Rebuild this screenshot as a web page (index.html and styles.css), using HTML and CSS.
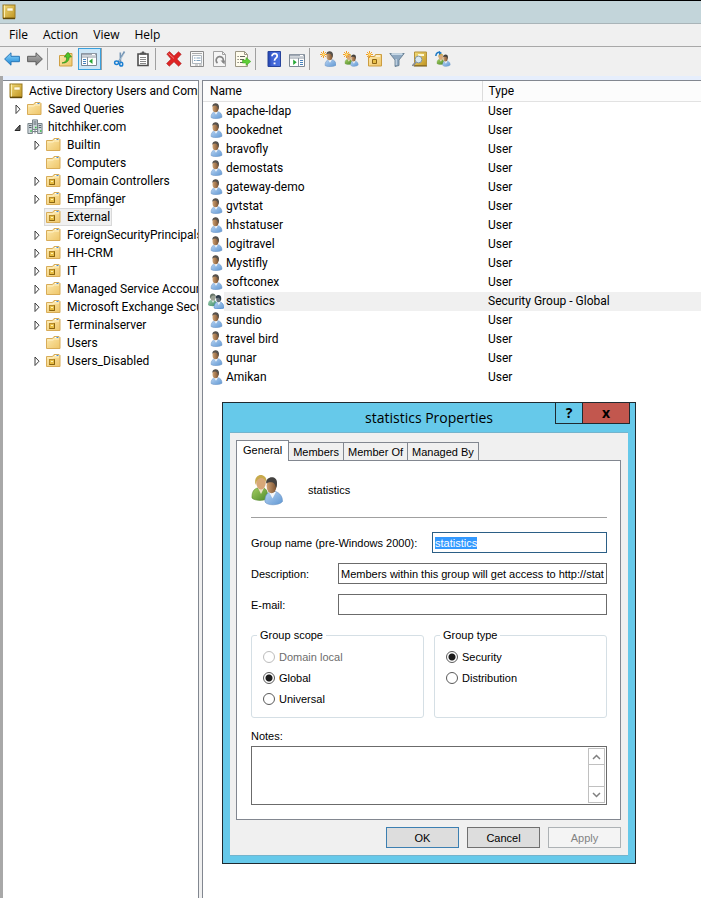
FILE: index.html
```html
<!DOCTYPE html>
<html lang="en">
<head>
<meta charset="utf-8">
<title>Active Directory Users and Computers</title>
<link rel="stylesheet" href="styles.css">
<script src="app.js" defer></script>
</head>
<body>
<svg class="sprite" aria-hidden="true">
  <defs>
    <linearGradient id="gFolder" x1="0" y1="0" x2="1" y2="1"><stop offset="0" stop-color="#fdeab0"/><stop offset="1" stop-color="#eec568"/></linearGradient>
    <linearGradient id="gBody" x1="0" y1="0" x2="1" y2="1"><stop offset="0" stop-color="#b9d4f2"/><stop offset="1" stop-color="#5f97d3"/></linearGradient>
    <linearGradient id="gGreen" x1="0" y1="0" x2="1" y2="1"><stop offset="0" stop-color="#a4cf62"/><stop offset="1" stop-color="#4f8a2c"/></linearGradient>
    <linearGradient id="gTeal" x1="0" y1="0" x2="1" y2="1"><stop offset="0" stop-color="#9ccbb0"/><stop offset="1" stop-color="#3f8f68"/></linearGradient>
    <linearGradient id="gFace" x1="0" y1="0" x2="1" y2="0"><stop offset="0" stop-color="#cfa273"/><stop offset="1" stop-color="#7c5230"/></linearGradient>
    <linearGradient id="gGold" x1="0" y1="0" x2="1" y2="1"><stop offset="0" stop-color="#f3dc7a"/><stop offset="1" stop-color="#bf9420"/></linearGradient>
    <linearGradient id="gBlue" x1="0" y1="0" x2="0" y2="1"><stop offset="0" stop-color="#8fd6fb"/><stop offset="1" stop-color="#1b86d6"/></linearGradient>
    <linearGradient id="gGray" x1="0" y1="0" x2="0" y2="1"><stop offset="0" stop-color="#b5b5b5"/><stop offset="1" stop-color="#707070"/></linearGradient>
    <linearGradient id="gHelp" x1="0" y1="0" x2="1" y2="0"><stop offset="0" stop-color="#1f3fa8"/><stop offset=".3" stop-color="#3f63d4"/><stop offset="1" stop-color="#4a72e0"/></linearGradient>
  </defs>
  <symbol id="book" viewBox="0 0 16 16">
    <rect x="2" y="1" width="12" height="13" fill="url(#gGold)" stroke="#9a7a22"/><path d="M2 14.5h12" stroke="#604808" stroke-width="1.4"/><path d="M3.5 1.5v12" stroke="#fbeeb0"/><rect x="6" y="4" width="6" height="3" fill="#fffbe6" stroke="#c8a848" stroke-width=".6"/>
  </symbol>
  <symbol id="folder" viewBox="0 0 16 16">
    <path d="M.500 13.500V3.500h6l1.500-2h5l1 1v11z" fill="url(#gFolder)" stroke="#d8ac58"/><path d="M9 2.500h4" stroke="#fff"/><path d="M10.500 2.500h2" stroke="#4a8fd0"/><path d="M1.500 5h5.500l1.500-1h4.500" fill="none" stroke="#fff2c8"/>
  </symbol>
  <symbol id="ou" viewBox="0 0 16 16">
    <path d="M.500 13.500V3.500h6l1.500-2h5l1 1v11z" fill="url(#gFolder)" stroke="#d8ac58"/><path d="M9 2.500h4" stroke="#fff"/><path d="M10.500 2.500h2" stroke="#4a8fd0"/><path d="M1.500 5h5.500l1.500-1h4.500" fill="none" stroke="#fff2c8"/><rect x="3.500" y="6.500" width="5" height="5" fill="#e7bd45" stroke="#b58a2c"/><path d="M5 8.500h2" stroke="#fff3b5"/><path d="M8.500 6.500v5H3.500" fill="none" stroke="#8a640f"/>
  </symbol>
  <symbol id="domain" viewBox="0 0 16 16">
    <g fill="#cbd4d9" stroke="#6f7a80" stroke-width=".9"><path d="M5.500 .900h5v9.600h-5z"/><path d="M.900 4.500h4.500v10H.900zM10.600 4.500h4.500v10h-4.500z"/></g>
    <path d="M6.500 3h3M6.500 5h3M2 6.500h2.500M2 8.500h2.500M11.700 6.500h2.500M11.700 8.500h2.500" stroke="#59646b"/><path d="M3.300 12h1.500M8 8.500h1.500M13 12h1.500" stroke="#2fbf3d" stroke-width="1.500"/><path d="M5.500 12.500h5M8 10.500v4" stroke="#7a848a"/>
  </symbol>
  <symbol id="user" viewBox="0 0 16 16">
    <path d="M3 14.500c0-3.500 1.500-5.500 4-5.800l2.500-.2c3 .5 4.500 2.500 4.500 5.800-2 1.500-8.500 2-11 .2z" fill="url(#gBody)" stroke="#6c94c4" stroke-width=".5"/><path d="M6 8.500l2 3.200 2-3.200z" fill="#f6f8fa"/><ellipse cx="7.500" cy="5" rx="3" ry="4.300" fill="url(#gFace)"/><path d="M4.300 3.800c-.3-4.600 6.700-4.800 6.700-.2 0 1.600-.3 2.400-.8 3.200C10 5 9.300 3 8 2.700c-1.500-.3-2.800.1-3.700 1.100z" fill="#55514c"/>
  </symbol>
  <symbol id="pair" viewBox="0 0 32 32">
    <path d="M1 24c-.3-6 2-9.500 6-10l6 0c4 2 4 7 3 11-4 2-12 2-15-1z" fill="url(#gGreen)" stroke="#578b31" stroke-width=".6"/><path d="M7 14l3 6 3-6z" fill="#eee2c8"/><ellipse cx="10" cy="9" rx="4.800" ry="6.500" fill="#d7a878"/><path d="M4.500 11C1.500-2 17-2 15.500 9c-1-3-3-5-5-5-3 0-5 2-6 7z" fill="#c7aa4c"/>
    <path d="M14 28c-.3-6 1.700-9 5.500-10l5-.5c4.500 1.500 7 5 7 10-3 4-15 4.500-17.500.5z" fill="url(#gBody)" stroke="#6791c3" stroke-width=".6"/><path d="M18 18l3.500 6.500 3.500-6.500z" fill="#f4f7fa"/><ellipse cx="20.500" cy="12" rx="4.900" ry="7.300" fill="url(#gFace)"/><path d="M15.200 9.500C14.500 1.500 26.500 1 26 9c0 3-.3 3.800-1 5-.5-2.500-1.500-4.800-3.200-5.400-2-.5-4.600-.4-6.600.9z" fill="#44423f"/>
  </symbol>
  <symbol id="group" viewBox="0 0 32 32">
    <path d="M0 24c0-6 2-9.500 6-10h7c4 2 4 7 3 11-4 2-12 2-16-1z" fill="url(#gTeal)"/><path d="M7 14l3 6 3-6z" fill="#e4eee9"/><ellipse cx="10" cy="9" rx="4.800" ry="6.500" fill="#9aa194"/><path d="M4.500 12C0-2 17-3 16 10c-1-4-3-5-5-5-3 0-5 2-6.500 7z" fill="#68766b"/>
    <path d="M12 30c0-7 2-11 6.500-12h6C29.500 19.500 32 24 32 30c-4 2.500-16 2.500-20 0z" fill="url(#gBody)" stroke="#3f7fca"/><path d="M18.500 18l3 6.500 3.500-6.500z" fill="#e8f2fb"/><ellipse cx="21" cy="12" rx="4.600" ry="6.500" fill="#6a747d"/><path d="M15.500 11C14 2 27 2 26.500 10.500c0 3-.5 4-1.500 5.500-.5-3-1.500-6-3.500-6.500-2-.3-4 0-6 1.500z" fill="#2c3a48"/>
  </symbol>
  <symbol id="spark" viewBox="0 0 8 8">
    <path d="M4 0v8M0 4h8M1.200 1.200l5.600 5.600M6.800 1.200L1.200 6.800" stroke="#f19a1d" stroke-width="1.100"/><circle cx="4" cy="4" r="1.500" fill="#ffe27c"/>
  </symbol>
  <symbol id="back" viewBox="0 0 16 16"><path d="M.600 8L7 1.800v3.500h8.400v5.400H7v3.500z" fill="url(#gBlue)" stroke="#2877b8"/></symbol>
  <symbol id="forward" viewBox="0 0 16 16"><path d="M15.400 8L9 1.800v3.500H.600v5.400H9v3.500z" fill="url(#gGray)" stroke="#5f5f5f"/></symbol>
  <symbol id="up" viewBox="0 0 16 16"><path d="M1.500 15V4.500h6l1-2h5.500V15z" fill="url(#gFolder)" stroke="#cfa044"/><path d="M4 12c4-1 5-3 4.500-6H6.300L10 1.300 13.500 6h-2.300c0 4-3 6.500-7.200 6z" fill="#4fc528" stroke="#2e8c18" stroke-width=".7"/></symbol>
  <symbol id="tree-pane" viewBox="0 0 16 16"><path d="M.500 2.500h15v12H.500z" fill="#fff" stroke="#7d8894"/><path d="M1 3.500h14" stroke="#a0a9b4" stroke-width="2"/><path d="M11 3.500h3" stroke="#fff"/><path d="M1 6h14" stroke="#8994a0"/><path d="M6.500 6v8" stroke="#8994a0"/><path d="M2 8.500h3M2 10.500h3M2 12.500h3" stroke="#4682bd"/><path d="M11.500 7.500v5.500L8 10.200z" fill="#28a736"/></symbol>
  <symbol id="cut" viewBox="0 0 16 16"><path d="M12.500.500L6.500 11M8.300 1.500L8.500 11" stroke="#7696b5" stroke-width="1.600"/><path d="M12 3L7 10" stroke="#d6e4ef" stroke-width=".5"/><ellipse cx="4.600" cy="11.800" rx="2" ry="1.700" fill="none" stroke="#1b7fd2" stroke-width="1.500"/><ellipse cx="9.200" cy="13.200" rx="1.500" ry="1.900" fill="none" stroke="#1b7fd2" stroke-width="1.500"/></symbol>
  <symbol id="paste" viewBox="0 0 16 16"><path d="M3 3h10v11.500H3z" fill="#fff" stroke="#4e4e4e" stroke-width="1.600"/><path d="M5 3.500V1.800h1.500L7 .500h2l.5 1.300H11v1.700z" fill="#555"/><path d="M5 6.500h6M5 8.500h6M5 10.500h6M5 12.500h6" stroke="#888"/></symbol>
  <symbol id="delete" viewBox="0 0 16 16"><path d="M.800 3L3.500.600 8 5.100 12.500.800 15.200 3.300 10.900 8l4.400 4.600-2.700 2.600L8 10.800l-4.700 4.400L.600 12.600 5.100 8z" fill="#df2424" stroke="#a81c1c" stroke-width=".6"/><path d="M2.500 2.500L8 7.500" stroke="#f27d78"/></symbol>
  <symbol id="props" viewBox="0 0 16 16"><path d="M1.500.500h13v15h-13z" fill="#f8f8f8" stroke="#8b8b8b"/><path d="M3 2.500h10" stroke="#aaa"/><path d="M3.500 4.500h9v8h-9z" fill="#fff" stroke="#b0b8bf"/><path d="M5 7h1.500M7.500 7h4M5 9.500h1.500M7.500 9.500h4" stroke="#7d9fbb"/><path d="M6 14h3M10 14h3" stroke="#a4a4a4"/></symbol>
  <symbol id="refresh" viewBox="0 0 16 16"><path d="M1.500.500h9l3 3v12h-12z" fill="#f6f6f6" stroke="#a2a2a2"/><path d="M10.500.500v3h3" fill="none" stroke="#a2a2a2"/><path d="M5.500 12a3.600 3.600 0 1 1 5-.500" fill="none" stroke="#868686" stroke-width="1.700"/><path d="M8.500 9.500l4.500 0-.500 4z" fill="#868686"/></symbol>
  <symbol id="export" viewBox="0 0 16 16"><path d="M.500.500h9l3 3v12H.500z" fill="#fffcec" stroke="#9c9784"/><path d="M9.500.500v3h3" fill="none" stroke="#9c9784"/><path d="M2.500 5.500h1.200M2.500 8.500h1.200M2.500 11.500h1.200M5 5.500h5M5 8.500h4M5 11.500h3" stroke="#64645c"/><path d="M7.500 9h3.500V6.500l4.800 4-4.800 4V12H7.500z" fill="#60cf38" stroke="#36a219" stroke-width=".5"/></symbol>
  <symbol id="help" viewBox="0 0 16 16"><path d="M2 .500h12.500v15H2z" fill="url(#gHelp)" stroke="#27439b"/><path d="M6 5.200C6 1.800 11.200 2 11.200 5c0 2.200-2.700 2.300-2.700 4.800" fill="none" stroke="#fff" stroke-width="1.700"/><path d="M7.600 11.500h1.900v1.800H7.600z" fill="#fff"/></symbol>
  <symbol id="action-pane" viewBox="0 0 16 16"><path d="M.500 3.500h15v12H.500z" fill="#fff" stroke="#7d8894"/><path d="M1 4.500h14" stroke="#a0a9b4" stroke-width="2"/><path d="M11 4.500h3" stroke="#fff"/><path d="M1 7h14" stroke="#8994a0"/><path d="M9.500 7v8" stroke="#8994a0"/><path d="M11 9.500h3M11 11.500h3M11 13.500h3" stroke="#4682bd"/><path d="M4.200 8.500v5.500l3.500-2.800z" fill="#28a736"/></symbol>
  <symbol id="new-user" viewBox="0 0 16 16"><use href="#user" x="2" y="0" width="16" height="16"/><use href="#spark" x="0" y="0" width="7" height="7"/></symbol>
  <symbol id="new-group" viewBox="0 0 16 16"><use href="#pair" x="1" y="2" width="15" height="14"/><use href="#spark" x="0" y="0" width="7" height="7"/></symbol>
  <symbol id="new-ou" viewBox="0 0 16 16"><path d="M2.500 15V5.500h6l1-2h6V15z" fill="url(#gFolder)" stroke="#cc9d40"/><path d="M10 5h4" stroke="#fff"/><path d="M6.500 8.500h4v4h-4z" fill="#e7bd45" stroke="#8c6412"/><use href="#spark" x="0" y="0" width="7" height="7"/></symbol>
  <symbol id="filter" viewBox="0 0 16 16"><path d="M.800 2.500h14.400L10 9v5.500l-4 1V9z" fill="#8da7c0" stroke="#5b7388" stroke-width=".8"/><path d="M2.500 3h11" stroke="#dbe8f3" stroke-width="1.500"/><path d="M7.200 8v6" stroke="#d3e0eb"/></symbol>
  <symbol id="find" viewBox="0 0 16 16"><path d="M2.500 1h12v13.500h-12z" fill="url(#gGold)" stroke="#b59238"/><path d="M2 15h13" stroke="#6e530c"/><path d="M6 3h6v2H6z" fill="#fff8d0"/><path d="M4 11L.500 14.800" stroke="#8b8f96" stroke-width="1.800"/><circle cx="6.500" cy="8.500" r="3.400" fill="#d8e8f0" stroke="#8496a3"/></symbol>
  <symbol id="add-group" viewBox="0 0 16 16"><use href="#pair" x="1" y="2" width="15" height="14"/><path d="M.800 5C1 2 3 1 5 1.500" fill="none" stroke="#1c78c4" stroke-width="1.500"/><path d="M4 0l3 2-3 2z" fill="#1c78c4"/></symbol>
  <symbol id="closed" viewBox="0 0 12 12"><path d="M3.500 2v8.500L7.500 6.200z" fill="#fff" stroke="#3c3c3c"/></symbol>
  <symbol id="open" viewBox="0 0 12 12"><path d="M7.500 4v5.500H2.500z" fill="#6a6a6a" stroke="#262626"/></symbol>
</svg>

<header class="titlebar"><svg class="icon"><use href="#book"/></svg></header>
<nav class="menubar">
  <button type="button">File</button><button type="button">Action</button><button type="button">View</button><button type="button">Help</button>
</nav>
<div class="toolbar" role="toolbar">
  <div class="tools">
    <button type="button" aria-label="Back"><svg class="icon"><use href="#back"/></svg></button>
    <button type="button" aria-label="Forward"><svg class="icon"><use href="#forward"/></svg></button>
  </div>
  <div class="tools">
    <button type="button" aria-label="Up"><svg class="icon"><use href="#up"/></svg></button>
    <button type="button" class="pressed" aria-label="Console tree"><svg class="icon"><use href="#tree-pane"/></svg></button>
  </div>
  <div class="tools">
    <button type="button" aria-label="Cut"><svg class="icon"><use href="#cut"/></svg></button>
    <button type="button" aria-label="Paste"><svg class="icon"><use href="#paste"/></svg></button>
  </div>
  <div class="tools">
    <button type="button" aria-label="Delete"><svg class="icon"><use href="#delete"/></svg></button>
    <button type="button" aria-label="Properties"><svg class="icon"><use href="#props"/></svg></button>
    <button type="button" aria-label="Refresh"><svg class="icon"><use href="#refresh"/></svg></button>
    <button type="button" aria-label="Export list"><svg class="icon"><use href="#export"/></svg></button>
  </div>
  <div class="tools">
    <button type="button" aria-label="Help topics"><svg class="icon"><use href="#help"/></svg></button>
    <button type="button" aria-label="Action pane"><svg class="icon"><use href="#action-pane"/></svg></button>
  </div>
  <div class="tools">
    <button type="button" aria-label="New user"><svg class="icon"><use href="#new-user"/></svg></button>
    <button type="button" aria-label="New group"><svg class="icon"><use href="#new-group"/></svg></button>
    <button type="button" aria-label="New organizational unit"><svg class="icon"><use href="#new-ou"/></svg></button>
    <button type="button" aria-label="Filter"><svg class="icon"><use href="#filter"/></svg></button>
    <button type="button" aria-label="Find"><svg class="icon"><use href="#find"/></svg></button>
    <button type="button" aria-label="Add to group"><svg class="icon"><use href="#add-group"/></svg></button>
  </div>
</div>

<main class="console">
  <div class="tree">
    <div class="row"><span class="node"><svg class="icon"><use href="#book"/></svg>Active Directory Users and Computers</span></div>
    <ul>
      <li><div class="row"><svg class="twisty"><use href="#closed"/></svg><span class="node"><svg class="icon"><use href="#folder"/></svg>Saved Queries</span></div></li>
      <li><div class="row"><svg class="twisty"><use href="#open"/></svg><span class="node"><svg class="icon"><use href="#domain"/></svg>hitchhiker.com</span></div>
        <ul>
          <li class="row"><svg class="twisty"><use href="#closed"/></svg><span class="node"><svg class="icon"><use href="#folder"/></svg>Builtin</span></li>
          <li class="row"><svg class="twisty"></svg><span class="node"><svg class="icon"><use href="#folder"/></svg>Computers</span></li>
          <li class="row"><svg class="twisty"><use href="#closed"/></svg><span class="node"><svg class="icon"><use href="#ou"/></svg>Domain Controllers</span></li>
          <li class="row"><svg class="twisty"><use href="#closed"/></svg><span class="node"><svg class="icon"><use href="#ou"/></svg>Empfänger</span></li>
          <li class="row"><svg class="twisty"></svg><span class="node selected"><svg class="icon"><use href="#ou"/></svg>External</span></li>
          <li class="row"><svg class="twisty"><use href="#closed"/></svg><span class="node"><svg class="icon"><use href="#folder"/></svg>ForeignSecurityPrincipals</span></li>
          <li class="row"><svg class="twisty"><use href="#closed"/></svg><span class="node"><svg class="icon"><use href="#ou"/></svg>HH-CRM</span></li>
          <li class="row"><svg class="twisty"><use href="#closed"/></svg><span class="node"><svg class="icon"><use href="#ou"/></svg>IT</span></li>
          <li class="row"><svg class="twisty"><use href="#closed"/></svg><span class="node"><svg class="icon"><use href="#folder"/></svg>Managed Service Accounts</span></li>
          <li class="row"><svg class="twisty"><use href="#closed"/></svg><span class="node"><svg class="icon"><use href="#ou"/></svg>Microsoft Exchange Security Groups</span></li>
          <li class="row"><svg class="twisty"><use href="#closed"/></svg><span class="node"><svg class="icon"><use href="#ou"/></svg>Terminalserver</span></li>
          <li class="row"><svg class="twisty"></svg><span class="node"><svg class="icon"><use href="#folder"/></svg>Users</span></li>
          <li class="row"><svg class="twisty"><use href="#closed"/></svg><span class="node"><svg class="icon"><use href="#ou"/></svg>Users_Disabled</span></li>
        </ul>
      </li>
    </ul>
  </div>
  <div class="list">
    <table>
      <thead><tr><th class="name-col">Name</th><th>Type</th></tr></thead>
      <tbody>
        <tr><td><span class="entry"><svg class="icon"><use href="#user"/></svg><span>apache-ldap</span></span></td><td>User</td></tr>
        <tr><td><span class="entry"><svg class="icon"><use href="#user"/></svg><span>bookednet</span></span></td><td>User</td></tr>
        <tr><td><span class="entry"><svg class="icon"><use href="#user"/></svg><span>bravofly</span></span></td><td>User</td></tr>
        <tr><td><span class="entry"><svg class="icon"><use href="#user"/></svg><span>demostats</span></span></td><td>User</td></tr>
        <tr><td><span class="entry"><svg class="icon"><use href="#user"/></svg><span>gateway-demo</span></span></td><td>User</td></tr>
        <tr><td><span class="entry"><svg class="icon"><use href="#user"/></svg><span>gvtstat</span></span></td><td>User</td></tr>
        <tr><td><span class="entry"><svg class="icon"><use href="#user"/></svg><span>hhstatuser</span></span></td><td>User</td></tr>
        <tr><td><span class="entry"><svg class="icon"><use href="#user"/></svg><span>logitravel</span></span></td><td>User</td></tr>
        <tr><td><span class="entry"><svg class="icon"><use href="#user"/></svg><span>Mystifly</span></span></td><td>User</td></tr>
        <tr><td><span class="entry"><svg class="icon"><use href="#user"/></svg><span>softconex</span></span></td><td>User</td></tr>
        <tr class="current"><td><span class="entry"><svg class="icon"><use href="#group"/></svg><span>statistics</span></span></td><td>Security Group - Global</td></tr>
        <tr><td><span class="entry"><svg class="icon"><use href="#user"/></svg><span>sundio</span></span></td><td>User</td></tr>
        <tr><td><span class="entry"><svg class="icon"><use href="#user"/></svg><span>travel bird</span></span></td><td>User</td></tr>
        <tr><td><span class="entry"><svg class="icon"><use href="#user"/></svg><span>qunar</span></span></td><td>User</td></tr>
        <tr><td><span class="entry"><svg class="icon"><use href="#user"/></svg><span>Amikan</span></span></td><td>User</td></tr>
      </tbody>
    </table>
  </div>
</main>

<section class="dialog" role="dialog" aria-labelledby="dialog-title">
  <header class="dialog-head">
    <h1 id="dialog-title">statistics Properties</h1>
    <div class="window-buttons">
      <button type="button" class="context-help">?</button>
      <button type="button" class="close">x</button>
    </div>
  </header>
  <form class="dialog-body">
    <div class="tabs" role="tablist">
      <button type="button" role="tab" class="tab active" aria-selected="true">General</button>
      <button type="button" role="tab" class="tab">Members</button>
      <button type="button" role="tab" class="tab">Member Of</button>
      <button type="button" role="tab" class="tab">Managed By</button>
    </div>
    <div class="panel">
      <div class="identity"><svg class="icon-large"><use href="#pair"/></svg><span>statistics</span></div>
      <div class="field wide-label"><label for="group-name">Group name (pre-Windows 2000):</label><input type="text" id="group-name" value="statistics"></div>
      <div class="field"><label for="description">Description:</label><input type="text" id="description" value="Members within this group will get access to http://statistics"></div>
      <div class="field"><label for="email">E-mail:</label><input type="text" id="email"></div>
      <div class="choices">
        <fieldset>
          <legend>Group scope</legend>
          <label class="disabled"><input type="radio" name="scope" disabled>Domain local</label>
          <label><input type="radio" name="scope" checked>Global</label>
          <label><input type="radio" name="scope">Universal</label>
        </fieldset>
        <fieldset>
          <legend>Group type</legend>
          <label><input type="radio" name="type" checked>Security</label>
          <label><input type="radio" name="type">Distribution</label>
        </fieldset>
      </div>
      <label class="notes-label" for="notes">Notes:</label>
      <div class="notes">
        <textarea id="notes"></textarea>
        <div class="scroller">
          <button type="button" aria-label="Scroll up"><svg viewBox="0 0 9 6"><path d="M1 5l3.500-3.500L8 5"/></svg></button>
          <button type="button" aria-label="Scroll down"><svg viewBox="0 0 9 6"><path d="M1 1l3.500 3.500L8 1"/></svg></button>
        </div>
      </div>
    </div>
    <div class="actions">
      <button type="button" class="default">OK</button>
      <button type="button">Cancel</button>
      <button type="button" disabled>Apply</button>
    </div>
  </form>
</section>
</body>
</html>
```
FILE: styles.css
```css
* { box-sizing: border-box; }

body {
  position: relative;
  display: flex;
  flex-direction: column;
  min-height: 100vh;
  margin: 0;
  background: #f0f0f0;
  color: #000;
  font: 12px/18px "Open Sans", "Noto Sans", sans-serif;
}

button, input, textarea { margin: 0; padding: 0; border: 0; font: inherit; color: inherit; background: none; }
ul { list-style: none; margin: 0; padding: 0; }

.sprite { position: absolute; width: 0; height: 0; }
.icon { flex: none; display: block; width: 16px; height: 16px; }

/* Console chrome */
.titlebar {
  display: flex;
  align-items: center;
  height: 24px;
  padding-left: 1px;
  border-top: 1px solid #000;
  border-bottom: 1px solid #a9b4b8;
  background: #c3d5da;
}

.menubar {
  display: flex;
  gap: 15px;
  height: 23px;
  padding-left: 9px;
  border-bottom: 1px solid #a8a8a8;
}

.toolbar {
  display: flex;
  height: 29px;
  padding: 1px;
}
.tools { display: flex; height: 22px; }
.tools + .tools { padding-left: 7px; border-left: 1px solid #a0a0a0; }
.tools button { display: flex; align-items: center; width: 23px; padding-left: 2px; border: 1px solid transparent; }
.tools .pressed { border-color: #3aa0dc; background: #cde6f6; }

.console {
  flex: 1;
  display: grid;
  grid-template-columns: 196px minmax(0, 1fr);
  gap: 3px;
  padding-top: 4px;
  border-left: 3px solid #a8a8a8;
  background: linear-gradient(#e6eefc 4px, #f0f0f0 4px);
  font-family: Roboto, "Open Sans", sans-serif;
}

/* Tree */
.tree {
  overflow: hidden;
  padding-top: 1px;
  border: solid #828790;
  border-width: 1px 1px 0 0;
  background: #fff;
  white-space: nowrap;
}
.tree > .row { padding-left: 3px; }
.tree ul { padding-left: 9px; }
.tree ul ul { padding-left: 19px; }
.row { display: flex; align-items: center; height: 18px; }
.twisty { flex: none; width: 13px; height: 12px; }
.node { display: flex; align-items: center; gap: 5px; height: 18px; padding: 0 1px; border: 1px solid transparent; }
.node.selected { border-color: #d9d9d9; background: #f0f0f0; }

/* List */
.list { border: solid #828790; border-width: 1px 0 0 1px; background: #fff; }
table { width: 100%; border-collapse: collapse; table-layout: fixed; }
th { height: 20px; padding: 2px 0 0 6px; border-bottom: 1px solid #e2e2e2; background: #fcfcfc; font-weight: normal; text-align: left; line-height: 17px; }
.name-col { width: 279px; padding-left: 7px; border-right: 1px solid #dcdcdc; }
td { height: 19px; padding: 0 0 0 6px; line-height: 19px; }
td:first-child { padding-left: 5px; }
.entry { display: flex; align-items: center; }
.entry span { flex: 1; padding-left: 2px; }
.current td + td, .current .entry span { background: #f0f0f0; }

/* Properties dialog, a floating window */
.dialog {
  position: absolute;
  left: 222px;
  top: 402px;
  width: 414px;
  padding: 0 7px 7px;
  border: 1px solid #1f2a30;
  background: #66c9ea;
  font: 11px/14px "Liberation Sans", Arial, sans-serif;
}
.dialog-head { display: grid; grid-template-columns: 1fr auto 1fr; height: 29px; }
.dialog-head h1 { grid-column: 2; margin: 0; font: 14px/29px "Open Sans", "Noto Sans", sans-serif; }
.window-buttons { justify-self: end; display: flex; height: 21px; margin-right: -2px; }
.window-buttons button { border: solid #1f2a30; border-width: 0 1px 1px; font: bold 14px/18px "Open Sans", sans-serif; }
.context-help { width: 28px; }
.window-buttons .close { width: 47px; border-left: 0; background: #c2574e; }

.dialog-body { padding: 7px 7px 7px 6px; border: solid #74b4cd; border-width: 1px 0; background: #f0f0f0; }

.tabs { display: flex; align-items: flex-end; }
.tab { height: 18px; padding: 0 4px; border: solid #828790; border-width: 1px 1px 0 0; }
.tab.active { position: relative; height: 21px; margin-bottom: -1px; padding: 0 6px 3px; border-left-width: 1px; background: #fff; }

.panel { padding: 13px 13px 14px 14px; border: 1px solid #828790; background: #fff; }
.identity { display: flex; align-items: center; gap: 25px; height: 44px; margin-bottom: 14px; padding-bottom: 12px; border-bottom: 1px solid #a0a0a0; }
.icon-large { width: 32px; height: 32px; }

.field { display: grid; grid-template-columns: 87px 1fr; align-items: center; margin-bottom: 10px; }
.field.wide-label { grid-template-columns: 181px 1fr; }
.field input { width: 100%; height: 21px; padding: 0 2px; border: 1px solid #6b6b6b; }
.field input:focus { outline: 0; border-color: #2b5f86; }
.field input::selection { background: #3399ff; color: #fff; }

.choices { display: grid; grid-template-columns: 1fr 1fr; gap: 10px; margin-top: 13px; }
fieldset { min-width: 0; margin: 0; padding: 4px 5px 8px; border: 1px solid #d5dfe5; border-radius: 3px; }
legend { padding: 0 3px; }
fieldset label { display: flex; align-items: center; gap: 4px; height: 21px; padding-left: 6px; }
fieldset .disabled { color: #6d6d6d; }
fieldset input { appearance: none; width: 12px; height: 12px; border: 1px solid #5a5a5a; border-radius: 50%; background: #fff; }
fieldset input:checked { background: radial-gradient(circle, #1c1c1c 3px, #fff 4px); }
fieldset input:disabled { border-color: #bcbcbc; }

.notes-label { display: block; margin: 11px 0 3px; }
.notes { display: flex; height: 59px; padding: 1px; border: 1px solid #6b6b6b; }
.notes textarea { flex: 1; min-width: 0; resize: none; outline: 0; }
.scroller { display: flex; flex-direction: column; justify-content: space-between; width: 17px; border: 1px solid #c0c0c0; }
.scroller button { display: grid; place-items: center; height: 16px; }
.scroller button:first-child { border-bottom: 1px solid #c0c0c0; }
.scroller button:last-child { border-top: 1px solid #c0c0c0; }
.scroller svg { width: 9px; height: 6px; fill: none; stroke: #808080; stroke-width: 1.5; }

.actions { display: flex; justify-content: flex-end; gap: 8px; margin-top: 7px; }
.actions button { width: 73px; height: 21px; border: 1px solid #707070; background: #dddddd; }
.actions .default { border-color: #3c7fb1; }
.actions button:disabled { border-color: #adb2b5; background: #f4f4f4; color: #838383; }
```
FILE: app.js
```js
// Open the dialog with the group name ready to be overwritten.
const groupName = document.getElementById('group-name');
groupName.focus();
groupName.select();
```
